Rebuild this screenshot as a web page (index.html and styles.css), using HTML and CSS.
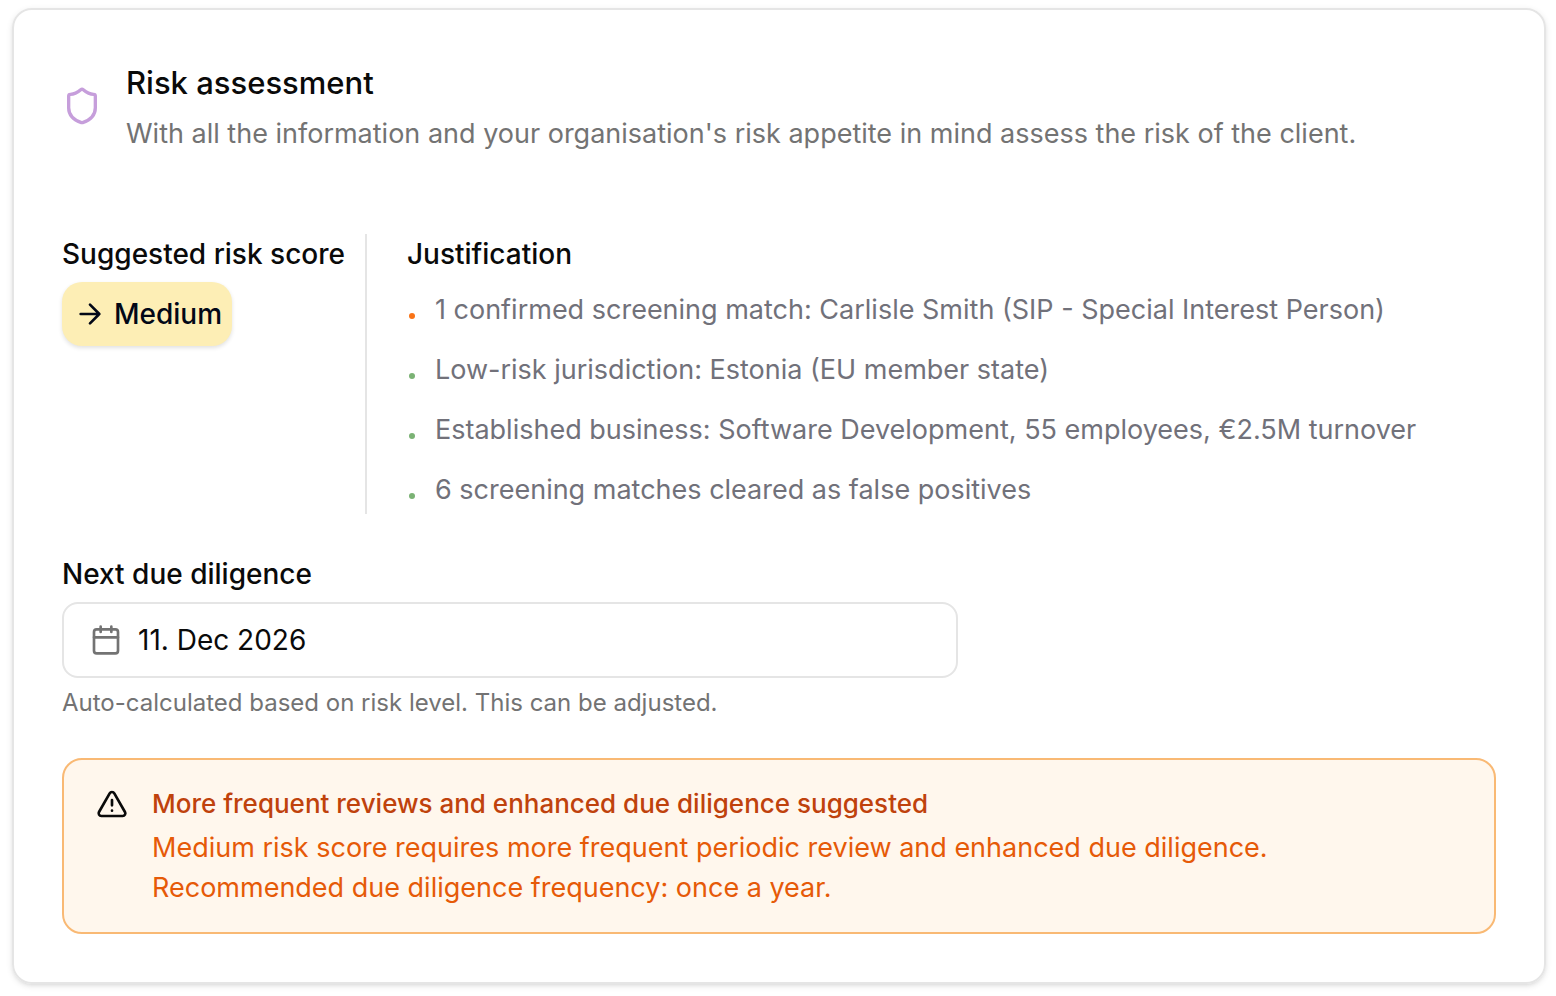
FILE: index.html
```html
<!DOCTYPE html>
<html lang="en">
<head>
<meta charset="utf-8">
<title>Risk assessment</title>
<link rel="stylesheet" href="styles.css">
</head>
<body>
<main class="card">
  <header class="card-header">
    <svg class="shield" viewBox="0 0 24 24" aria-hidden="true"><path d="M20 13c0 5-3.500 7.500-7.660 8.950a1 1 0 0 1-.67-.01C7.500 20.500 4 18 4 13V6a1 1 0 0 1 1-1c2 0 4.500-1.200 6.240-2.720a1.170 1.170 0 0 1 1.520 0C14.510 3.810 17 5 19 5a1 1 0 0 1 1 1z"/></svg>
    <div>
      <h1 class="title">Risk assessment</h1>
      <p class="subtitle">With all the information and your organisation's risk appetite in mind assess the risk of the client.</p>
    </div>
  </header>
  <div class="score-row">
    <section class="score">
      <h2 class="label">Suggested risk score</h2>
      <span class="badge"><svg class="icon" viewBox="0 0 24 24" aria-hidden="true"><path d="M5 12h14M12 5l7 7-7 7"/></svg>Medium</span>
    </section>
    <section class="justification">
      <h2 class="label">Justification</h2>
      <ul class="reasons">
        <li class="reason warn">1 confirmed screening match: Carlisle Smith (SIP - Special Interest Person)</li>
        <li class="reason">Low-risk jurisdiction: Estonia (EU member state)</li>
        <li class="reason">Established business: Software Development, 55 employees, €2.5M turnover</li>
        <li class="reason">6 screening matches cleared as false positives</li>
      </ul>
    </section>
  </div>
  <div class="field">
    <label class="label" for="due">Next due diligence</label>
    <button class="date" id="due" type="button"><svg class="icon calendar" viewBox="0 0 24 24" aria-hidden="true"><path d="M8 2v4M16 2v4M3 10h18"/><rect x="3" y="4" width="18" height="18" rx="2"/></svg>11. Dec 2026</button>
    <p class="hint">Auto-calculated based on risk level. This can be adjusted.</p>
  </div>
  <div class="alert" role="alert">
    <svg class="icon triangle" viewBox="0 0 24 24" aria-hidden="true"><path d="m21.730 18-8-14a2 2 0 0 0-3.480 0l-8 14A2 2 0 0 0 4 21h16a2 2 0 0 0 1.730-3M12 9v4M12 17h.01"/></svg>
    <div>
      <h2 class="alert-title">More frequent reviews and enhanced due diligence suggested</h2>
      <p class="alert-text">Medium risk score requires more frequent periodic review and enhanced due diligence.<br>Recommended due diligence frequency: once a year.</p>
    </div>
  </div>
</main>
</body>
</html>
```
FILE: styles.css
```css
* { box-sizing: border-box; }
body { margin: 0; padding: 8px 10px 12px 12px; background: #fff; color: #0a0a0a; font: 27px/40px Inter, sans-serif; }
h1, h2, p, ul { margin: 0; padding: 0; }
h1, h2 { font-weight: 500; }
svg { flex: none; fill: none; stroke: currentColor; stroke-width: 2; stroke-linecap: round; stroke-linejoin: round; }
.card { border: 2px solid #e5e5e5; border-radius: 20px; padding: 48px; box-shadow: 0 2px 6px rgba(0, 0, 0, .1), 0 2px 4px -2px rgba(0, 0, 0, .1); }
.card-header { display: flex; align-items: center; gap: 24px; margin-bottom: 80px; }
.shield { width: 40px; height: 40px; color: #c69edb; }
.icon { width: 32px; height: 32px; }
.title { font-size: 31px; line-height: 48px; margin-bottom: 8px; }
.card-header .title { line-height: 50px; margin-bottom: 6px; }
.subtitle { color: #737373; }
.score-row { display: flex; margin-bottom: 40px; }
.score { flex: none; padding-right: 20px; border-right: 2px solid #e5e5e5; }
.justification { padding-left: 40px; }
.label { display: block; font-size: 28px; line-height: 40px; font-weight: 500; }
.badge { display: inline-flex; align-items: center; gap: 8px; height: 64px; margin-top: 8px; padding: 0 10px 0 12px; border-radius: 20px; background: #fdeeb5; color: #020817; font-size: 28px; font-weight: 500; box-shadow: 0 2px 4px rgba(0, 0, 0, .12); }
.reasons { display: grid; gap: 20px; margin-top: 16px; padding-bottom: 4px; list-style: none; color: #71717a; }
.reason { display: flex; align-items: center; }
.reason::before { content: ""; flex: none; width: 6px; height: 6px; margin: 12px 20px 0 2px; border-radius: 50%; background: #7bb274; }
.warn::before { background: #f97316; }
.date { display: flex; align-items: center; gap: 16px; width: 896px; max-width: 100%; height: 76px; margin-top: 8px; padding: 0 26px; border: 2px solid #e5e5e5; border-radius: 16px; background: #fff; color: inherit; font: inherit; font-size: 28px; }
.calendar { color: #737373; }
.hint { margin-top: 8px; color: #737373; font-size: 24px; line-height: 34px; }
.alert { display: flex; gap: 24px; margin-top: 38px; padding: 24px 32px; border: 2px solid #f9b974; border-radius: 20px; background: #fff7ed; }
.triangle { margin-top: 4px; }
.alert-title { color: #bf420c; font-size: 26px; line-height: 40px; }
.alert-text { color: #e65a08; margin-top: 4px; }
```
